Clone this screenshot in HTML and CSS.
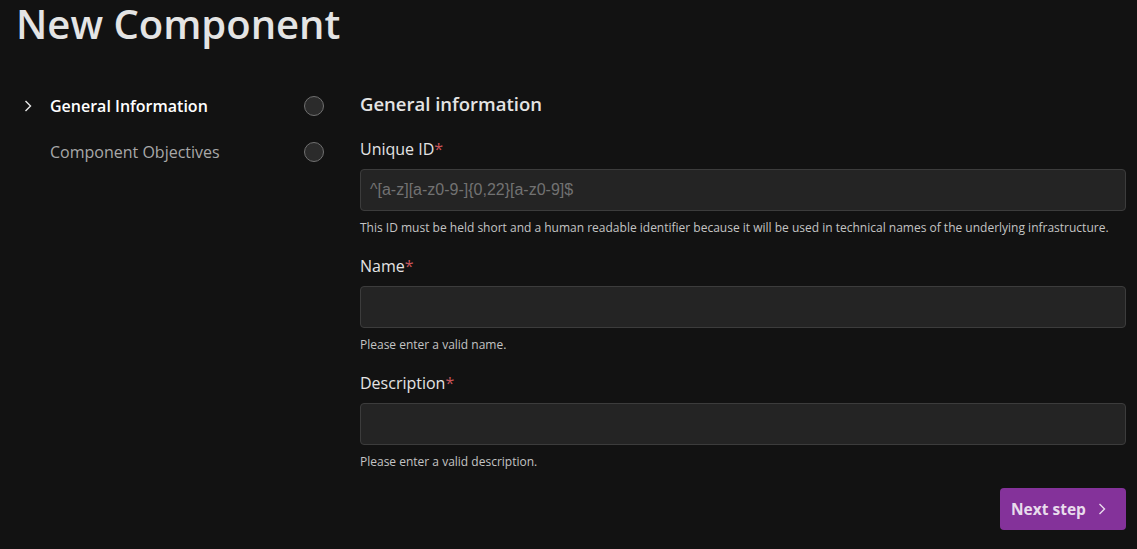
FILE: index.html
```html
<!DOCTYPE html>
<html>
<head>
<meta charset="utf-8">
<link rel="stylesheet" href="styles.css">
</head>
<body>
<div class="page">
  <h1 class="title">New Component</h1>
  <div class="layout">
    <nav class="steps">
      <div class="step active">
        <span class="chev"><svg width="8" height="12" viewBox="0 0 8 12"><path d="M1.5 1 L6.5 6 L1.5 11" fill="none" stroke="#e8e8e8" stroke-width="1.4"/></svg></span>
        <span class="step-label">General Information</span>
        <span class="dot"></span>
      </div>
      <div class="step">
        <span class="chev"></span>
        <span class="step-label">Component Objectives</span>
        <span class="dot"></span>
      </div>
    </nav>
    <main class="form">
      <h2 class="section">General information</h2>
      <div class="field">
        <label class="label">Unique ID<span class="req">*</span></label>
        <div class="input"><span class="ph">^[a-z][a-z0-9-]{0,22}[a-z0-9]$</span></div>
        <div class="help">This ID must be held short and a human readable identifier because it will be used in technical names of the underlying infrastructure.</div>
      </div>
      <div class="field">
        <label class="label">Name<span class="req">*</span></label>
        <div class="input"></div>
        <div class="help">Please enter a valid name.</div>
      </div>
      <div class="field">
        <label class="label">Description<span class="req">*</span></label>
        <div class="input"></div>
        <div class="help">Please enter a valid description.</div>
      </div>
      <div class="actions">
        <button class="btn">Next step <svg width="8" height="12" viewBox="0 0 8 12"><path d="M1.5 1 L6.5 6 L1.5 11" fill="none" stroke="#e8dcec" stroke-width="1.4"/></svg></button>
      </div>
    </main>
  </div>
</div>
</body>
</html>
```
FILE: styles.css
```css
* { box-sizing: border-box; }
html, body { margin: 0; background: #121212; }
body {
  font-family: "Open Sans", "Noto Sans", sans-serif;
  color: #e2e2e2;
  height: 549px;
  overflow: hidden;
}
.page { padding: 0 11px 0 16px; }
.title {
  margin: 0;
  font-size: 40px;
  line-height: 48px;
  font-weight: 600;
  color: #e4e4e4;
}
.layout {
  display: flex;
  margin-top: 44px;
}
.steps {
  width: 344px;
  flex: none;
  display: flex;
  flex-direction: column;
  gap: 22px;
  padding-top: 2px;
}
.step {
  display: flex;
  align-items: center;
  height: 24px;
  width: 308px;
}
.chev {
  width: 34px;
  padding-left: 8px;
  display: flex;
  align-items: center;
}
.step-label {
  flex: 1;
  font-size: 16px;
  color: #a8a8a8;
}
.step.active .step-label { color: #ffffff; font-weight: 600; }
.dot {
  width: 20px;
  height: 20px;
  border-radius: 50%;
  background: #2b2b2b;
  border: 1px solid #707070;
}
.form { flex: 1; }
.section {
  margin: 0 0 21px;
  font-size: 18.5px;
  line-height: 24px;
  font-weight: 600;
  color: #e4e4e4;
}
.field { margin-bottom: 18px; }
.label {
  display: block;
  font-size: 16px;
  line-height: 24px;
  color: #e4e4e4;
  margin-bottom: 8px;
}
.req { color: #c8555a; }
.input {
  height: 42px;
  background: #242424;
  border: 1px solid #3c3c3c;
  border-radius: 4px;
  display: flex;
  align-items: center;
  padding: 0 9px;
}
.ph {
  font-family: "Liberation Sans", Arial, sans-serif;
  font-size: 16px;
  color: #727272;
}
.help {
  margin-top: 9px;
  font-size: 12px;
  line-height: 16px;
  color: #c4c4c4;
}
.actions {
  display: flex;
  justify-content: flex-end;
  margin-top: 2px;
}
.btn {
  height: 42px;
  width: 126px;
  background: #84329a;
  border: none;
  border-radius: 4px;
  font-family: "Open Sans", "Noto Sans", sans-serif;
  font-weight: 700;
  font-size: 15.5px;
  color: #e8dcec;
  display: flex;
  align-items: center;
  justify-content: space-between;
  padding: 0 20px 0 11px;
}
```
